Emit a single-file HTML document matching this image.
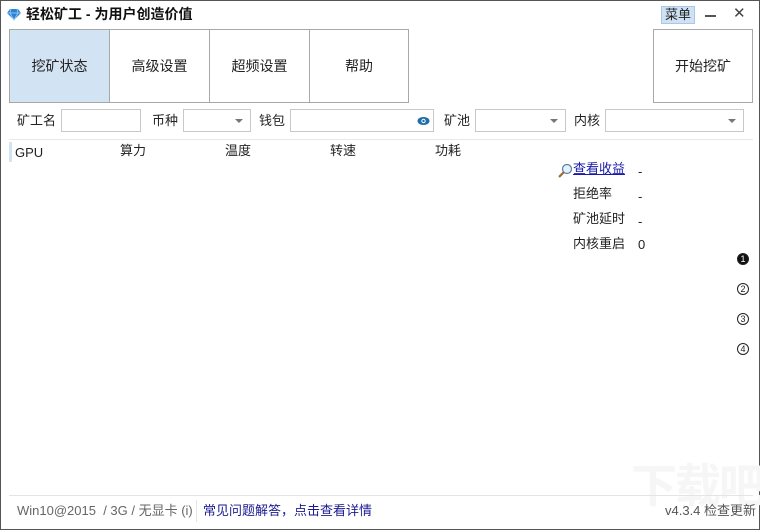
<!DOCTYPE html>
<html><head><meta charset="utf-8"><style>
*{margin:0;padding:0;box-sizing:border-box}
body{width:760px;height:530px;background:#fff;font-family:"Liberation Sans","Noto Sans CJK SC",sans-serif;font-size:13px;color:#222;position:relative;overflow:hidden}
.win{position:absolute;left:0;top:0;width:760px;height:530px;border:1px solid #555}
.a{position:absolute;white-space:nowrap;line-height:18px}
.tab{position:absolute;top:28px;width:101px;height:74px;border:1px solid #a8a8a8;background:#fff;display:flex;align-items:center;justify-content:center;font-size:14px;color:#222}
.inp{position:absolute;height:23px;border:1px solid #c8c8c8;background:#fff}
.cb::after{content:"";position:absolute;right:7px;top:9px;border-left:4px solid transparent;border-right:4px solid transparent;border-top:4px solid #777}
.lbl{position:absolute;top:111px;font-size:13px;line-height:18px}
.hd{position:absolute;top:141px;font-size:13px;line-height:18px}
.n{position:absolute;left:736px;width:12px;height:12px;border-radius:50%;border:1px solid #222;font-size:9px;line-height:10px;text-align:center}
</style></head><body><div class="win">
<svg class="a" style="left:5px;top:7px" width="16" height="13" viewBox="0 0 16 13"><path d="M1 5 L4 1 H12 L15 5 L8 12 Z" fill="#2a7fd4"/><path d="M1 5 H15 M5 1 L4 5 L8 12 L12 5 L11 1" stroke="#8cc4f2" stroke-width="1" fill="none"/></svg>
<div class="a" style="left:25px;top:4px;font-size:14px;font-weight:bold;color:#111">轻松矿工 - 为用户创造价值</div>
<div class="a" style="left:660px;top:5px;width:34px;height:18px;background:#cfe2f4;border:1px solid #a9c8e6;font-size:13px;text-align:center;line-height:16px">菜单</div>
<div class="a" style="left:704px;top:14px;width:11px;height:1.5px;background:#555"></div>
<div class="a" style="left:732px;top:4px;font-size:15px;color:#444">✕</div>
<div class="tab" style="left:8px;background:#d2e3f3">挖矿状态</div>
<div class="tab" style="left:108px">高级设置</div>
<div class="tab" style="left:208px">超频设置</div>
<div class="tab" style="left:308px;width:100px">帮助</div>
<div class="tab" style="left:652px;width:100px">开始挖矿</div>
<div class="lbl" style="left:16px">矿工名</div>
<div class="inp" style="left:60px;top:108px;width:80px"></div>
<div class="lbl" style="left:151px">币种</div>
<div class="inp cb" style="left:182px;top:108px;width:68px"></div>
<div class="lbl" style="left:258px">钱包</div>
<div class="inp" style="left:289px;top:108px;width:144px"></div>
<svg class="a" style="left:416px;top:115px" width="13" height="10" viewBox="0 0 13 10"><ellipse cx="6.5" cy="5" rx="6" ry="4" fill="#1e6fa8"/><circle cx="6.5" cy="5" r="2.2" fill="#fff"/><circle cx="6.5" cy="5" r="1.2" fill="#1e6fa8"/></svg>
<div class="lbl" style="left:443px">矿池</div>
<div class="inp cb" style="left:474px;top:108px;width:91px"></div>
<div class="lbl" style="left:573px">内核</div>
<div class="inp cb" style="left:604px;top:108px;width:139px"></div>
<div class="a" style="left:8px;top:138px;width:744px;height:1px;background:#e8e8e8"></div>
<div class="a" style="left:8px;top:141px;width:3px;height:20px;background:#d2e3f3"></div>
<div class="hd" style="left:14px;top:143px">GPU</div>
<div class="hd" style="left:119px">算力</div>
<div class="hd" style="left:224px">温度</div>
<div class="hd" style="left:329px">转速</div>
<div class="hd" style="left:434px">功耗</div>
<svg class="a" style="left:556px;top:162px" width="16" height="16" viewBox="0 0 16 16"><line x1="2" y1="14" x2="7" y2="9" stroke="#a06a2a" stroke-width="2.2"/><circle cx="10" cy="6" r="4.5" fill="#e6f2fb" stroke="#5a7fa0" stroke-width="1.2"/></svg>
<div class="a" style="left:572px;top:159px;color:#1a1aa8;text-decoration:underline">查看收益</div>
<div class="a" style="left:637px;top:162px">-</div>
<div class="a" style="left:572px;top:184px">拒绝率</div><div class="a" style="left:637px;top:187px">-</div>
<div class="a" style="left:572px;top:209px">矿池延时</div><div class="a" style="left:637px;top:212px">-</div>
<div class="a" style="left:572px;top:234px">内核重启</div><div class="a" style="left:637px;top:235px">0</div>
<div class="n" style="top:252px;background:#111;color:#fff">1</div>
<div class="n" style="top:282px">2</div>
<div class="n" style="top:312px">3</div>
<div class="n" style="top:342px">4</div>
<div class="a" style="left:630px;top:455px;font-size:46px;line-height:60px;color:#f6f6f6;font-weight:bold;letter-spacing:-2px">下载吧</div>
<div class="a" style="left:8px;top:494px;width:744px;height:1px;background:#e4e4e4"></div>
<div class="a" style="left:16px;top:501px;color:#666">Win10@2015 &nbsp;/ 3G / 无显卡 (i)</div>
<div class="a" style="left:195px;top:499px;width:1px;height:22px;background:#e4e4e4"></div>
<div class="a" style="left:202px;top:501px;color:#1a1a90">常见问题解答，点击查看详情</div>
<div class="a" style="left:664px;top:501px;color:#555">v4.3.4 检查更新</div>
</div></body></html>
